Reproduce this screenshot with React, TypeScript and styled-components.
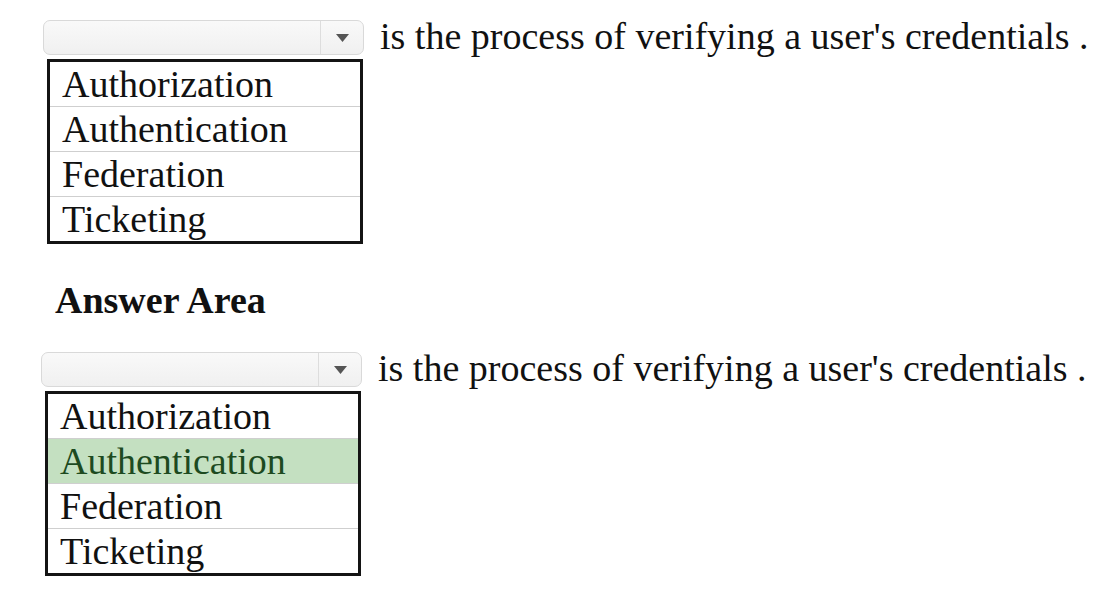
import styled, { createGlobalStyle } from "styled-components";

const options = ["Authorization", "Authentication", "Federation", "Ticketing"];

const GlobalStyle = createGlobalStyle`
  html, body {
    margin: 0;
    padding: 0;
    background: #ffffff;
  }
  body {
    font-family: "Liberation Serif", "Times New Roman", serif;
    color: #111111;
  }
`;

const Page = styled.div`
  width: 1105px;
  height: 594px;
  box-sizing: border-box;
  padding: 20px 0 0 43px;
  display: flex;
  flex-direction: column;
  overflow: hidden;
`;

const Question = styled.div<{ $shift?: number }>`
  display: flex;
  flex-direction: column;
  margin-left: ${(p) => p.$shift ?? 0}px;
`;

const Line = styled.div`
  display: flex;
  align-items: flex-start;
  gap: 16px;
  height: 35px;
`;

const Select = styled.div`
  width: 321px;
  height: 35px;
  flex-shrink: 0;
  box-sizing: border-box;
  border: 1px solid #d9d9d9;
  border-radius: 7px;
  background: linear-gradient(#f9f9f9, #f0f0f0);
  display: flex;
  justify-content: flex-end;
`;

const ArrowBox = styled.div`
  width: 42px;
  border-left: 1px solid #dddddd;
  display: flex;
  align-items: center;
  justify-content: center;
  svg {
    display: block;
  }
`;

const Sentence = styled.span`
  font-size: 38px;
  line-height: 35px;
  white-space: nowrap;
  margin-top: -1px;
`;

const Options = styled.ul`
  list-style: none;
  margin: 4px 0 0 4px;
  padding: 0;
  width: 316px;
  box-sizing: border-box;
  border: 3px solid #141414;
`;

const Option = styled.li<{ $selected?: boolean }>`
  height: 44px;
  line-height: 44px;
  padding-left: 12px;
  font-size: 38px;
  background: ${(p) => (p.$selected ? "#c4e0c1" : "#ffffff")};
  color: ${(p) => (p.$selected ? "#1d4a1f" : "#111111")};
  & + & {
    border-top: 1px solid #cfcfcf;
  }
`;

const Heading = styled.h2`
  margin: 36px 0 32px 12px;
  font-size: 38px;
  line-height: 40px;
  font-weight: bold;
`;

const Arrow = () => (
  <svg width="13" height="8" viewBox="0 0 13 8">
    <path d="M0 0 L13 0 L6.5 8 Z" fill="#555555" />
  </svg>
);

const Block = ({ selected, shift }: { selected?: string; shift?: number }) => (
  <Question $shift={shift}>
    <Line>
      <Select>
        <ArrowBox>
          <Arrow />
        </ArrowBox>
      </Select>
      <Sentence>is the process of verifying a user's credentials .</Sentence>
    </Line>
    <Options>
      {options.map((o) => (
        <Option key={o} $selected={o === selected}>
          {o}
        </Option>
      ))}
    </Options>
  </Question>
);

export default function App() {
  return (
    <>
      <GlobalStyle />
      <Page>
        <Block />
        <Heading>Answer Area</Heading>
        <Block selected="Authentication" shift={-2} />
      </Page>
    </>
  );
}
